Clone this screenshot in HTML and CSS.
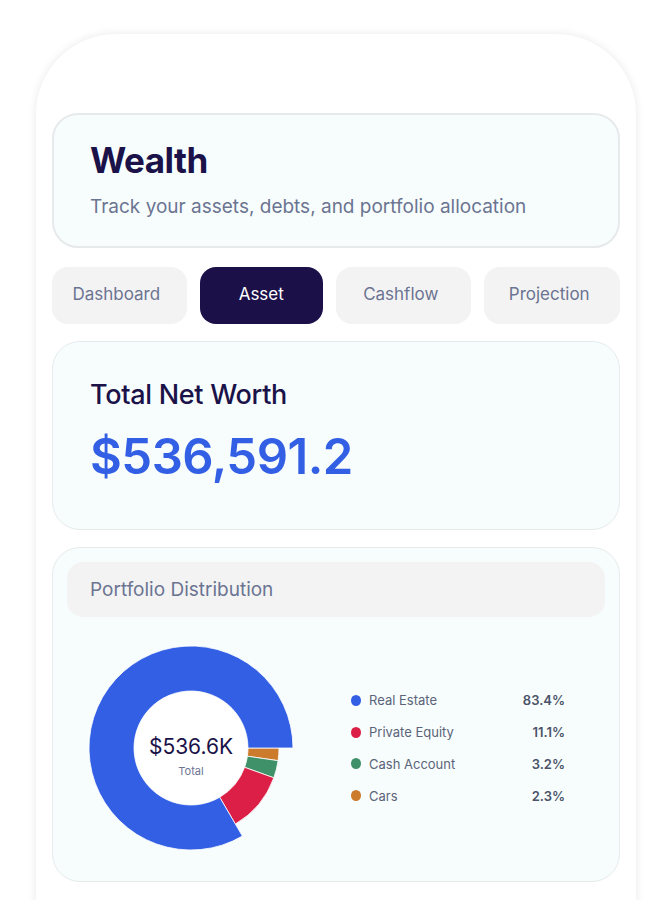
FILE: index.html
```html
<!DOCTYPE html>
<html lang="en">
<head>
  <meta charset="UTF-8">
  <meta name="viewport" content="width=device-width, initial-scale=1.0">
  <title>Wealth</title>
  <link rel="stylesheet" href="styles.css">
</head>
<body>

<div class="phone">

  <div class="header-card">
    <h1>Wealth</h1>
    <p>Track your assets, debts, and portfolio allocation</p>
  </div>

  <div class="tabs">
    <button class="tab">Dashboard</button>
    <button class="tab active">Asset</button>
    <button class="tab">Cashflow</button>
    <button class="tab">Projection</button>
  </div>

  <div class="card networth">
    <h2>Total Net Worth</h2>
    <div class="networth-value">$536,591.2</div>
  </div>

  <div class="card portfolio">
    <div class="portfolio-title">Portfolio Distribution</div>

    <div class="chart-row">
      <svg class="donut" width="220" height="220" viewBox="0 0 220 220">
        <path fill="#cc7a2c" stroke="#fff" stroke-width="0.8" d="M198 110 A88 88 0 0 1 197.08 122.67 L166.41 118.21 A57 57 0 0 0 167 110 Z"/>
        <path fill="#3f9169" stroke="#fff" stroke-width="0.8" d="M197.08 122.67 A88 88 0 0 1 192.8 139.81 L163.63 129.31 A57 57 0 0 0 166.41 118.21 Z"/>
        <path fill="#dc1f47" stroke="#fff" stroke-width="0.8" d="M192.8 139.81 A88 88 0 0 1 154.32 186.03 L138.71 159.24 A57 57 0 0 0 163.63 129.31 Z"/>
        <path fill="#335fe5" stroke="#fff" stroke-width="0.8" d="M161.37 198.12 A102 102 0 1 1 212 110 L167 110 A57 57 0 1 0 138.71 159.24 Z"/>
        <circle cx="110" cy="110" r="56.5" fill="#fff"/>
        <text class="donut-value" x="110" y="116" text-anchor="middle">$536.6K</text>
        <text class="donut-label" x="110" y="137" text-anchor="middle">Total</text>
      </svg>

      <ul class="legend">
        <li><span class="dot" style="background: #335fe5"></span><span class="legend-name">Real Estate</span><span class="legend-pct">83.4%</span></li>
        <li><span class="dot" style="background: #dc1f47"></span><span class="legend-name">Private Equity</span><span class="legend-pct">11.1%</span></li>
        <li><span class="dot" style="background: #3f9169"></span><span class="legend-name">Cash Account</span><span class="legend-pct">3.2%</span></li>
        <li><span class="dot" style="background: #cc7a2c"></span><span class="legend-name">Cars</span><span class="legend-pct">2.3%</span></li>
      </ul>
    </div>
  </div>

</div>

</body>
</html>
```

FILE: styles.css
```css
body {
  font-family: 'Inter', 'Roboto', sans-serif;
  background-color: #fff;
  margin: 0;
  padding-top: 34px;
  overflow: hidden;
}

.phone {
  width: 600px;
  min-height: 900px;
  margin: 0 auto;
  box-sizing: border-box;
  padding: 79px 16px 0;
  background-color: #fff;
  border-radius: 80px 80px 0 0;
  box-shadow: 0 0 10px rgba(0, 0, 0, 0.09);
}

.header-card {
  background-color: #f7fdfd;
  border: 2px solid #e7eaeb;
  border-radius: 26px;
  height: 135px;
  box-sizing: border-box;
  padding: 24px 36px 0;
}

.header-card h1 {
  margin: 0;
  font-size: 35px;
  line-height: 42px;
  font-weight: 700;
  color: #1a1248;
  letter-spacing: -0.5px;
}

.header-card p {
  margin: 14px 0 0;
  font-size: 19px;
  line-height: 24px;
  color: #6b7491;
}

.tabs {
  display: grid;
  grid-template-columns: 134fr 123fr 135fr 135fr;
  gap: 13px;
  margin-top: 19px;
}

.tab {
  height: 57px;
  border: none;
  border-radius: 16px;
  background-color: #f3f3f4;
  color: #6b7491;
  font-family: inherit;
  font-size: 17px;
  padding: 0 6px 3px 0;
  cursor: pointer;
}

.tab.active {
  background-color: #1b1048;
  color: #fff;
  padding-right: 0;
}

.card {
  background-color: #f7fdfd;
  border: 1px solid #e6ebeb;
  border-radius: 28px;
  box-sizing: border-box;
}

.networth {
  margin-top: 17px;
  height: 189px;
  padding: 37px 37px 0;
}

.networth h2 {
  margin: 0;
  font-size: 27px;
  line-height: 32px;
  font-weight: 500;
  color: #1a1248;
  letter-spacing: -0.3px;
}

.networth-value {
  margin-top: 16px;
  font-size: 49px;
  line-height: 60px;
  font-weight: 600;
  color: #335fe5;
  letter-spacing: -0.5px;
}

.portfolio {
  margin-top: 17px;
  padding: 14px 14px 23px;
}

.portfolio-title {
  height: 55px;
  line-height: 55px;
  padding-left: 23px;
  border-radius: 16px;
  background-color: #f3f3f4;
  color: #6b7491;
  font-size: 19px;
}

.chart-row {
  display: flex;
  align-items: center;
  margin-top: 21px;
  padding-left: 14px;
}

.donut {
  display: block;
  flex: none;
}

.donut-value {
  font-family: 'Inter', sans-serif;
  font-size: 21px;
  fill: #1a1248;
}

.donut-label {
  font-family: 'Inter', sans-serif;
  font-size: 11px;
  fill: #6b7491;
}

.legend {
  list-style: none;
  margin: 0 0 0 50px;
  padding: 0;
  width: 214px;
  display: flex;
  flex-direction: column;
  gap: 11.7px;
}

.legend li {
  display: flex;
  align-items: center;
  height: 20px;
  font-size: 13px;
}

.dot {
  width: 10px;
  height: 11px;
  border-radius: 50%;
  margin-right: 8px;
  flex: none;
}

.legend-name {
  color: #5b6479;
  flex: 1;
}

.legend-pct {
  color: #4b5368;
  font-weight: 600;
}
```
